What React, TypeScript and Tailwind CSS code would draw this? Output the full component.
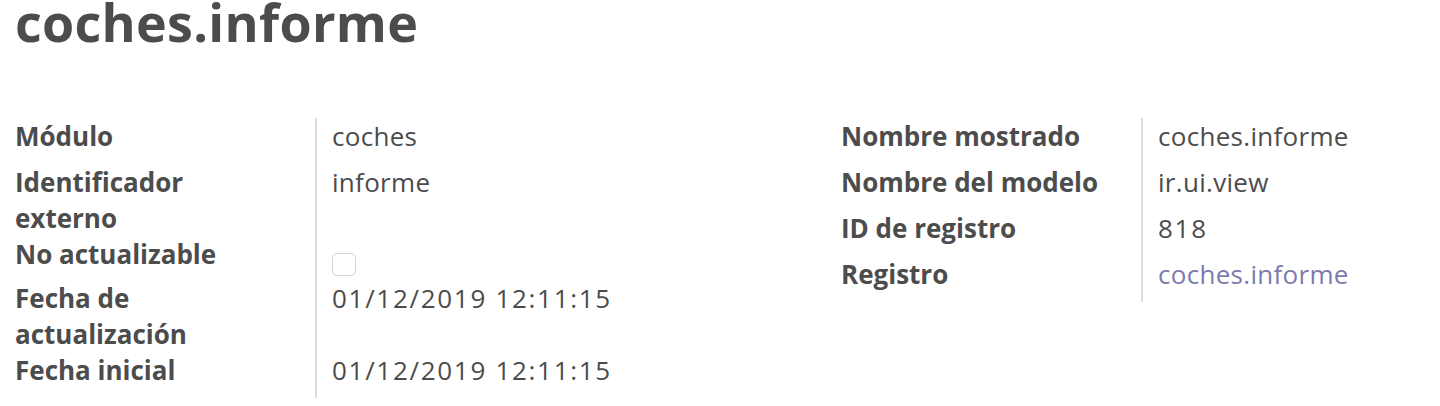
const font = { fontFamily: '"Open Sans", "Noto Sans", sans-serif' }

type Row = { label: string; value?: string; kind?: 'text' | 'date' | 'check' | 'link'; h: string }

const leftRows: Row[] = [
  { label: 'Módulo', value: 'coches', h: 'min-h-[46px]' },
  { label: 'Identificador externo', value: 'informe', h: 'min-h-[46px]' },
  { label: 'No actualizable', kind: 'check', h: 'min-h-[44px]' },
  { label: 'Fecha de actualización', value: '01/12/2019 12:11:15', kind: 'date', h: 'min-h-[46px]' },
  { label: 'Fecha inicial', value: '01/12/2019 12:11:15', kind: 'date', h: 'min-h-[46px]' },
]

const rightRows: Row[] = [
  { label: 'Nombre mostrado', value: 'coches.informe', h: 'min-h-[46px]' },
  { label: 'Nombre del modelo', value: 'ir.ui.view', h: 'min-h-[46px]' },
  { label: 'ID de registro', value: '818', kind: 'date', h: 'min-h-[46px]' },
  { label: 'Registro', value: 'coches.informe', kind: 'link', h: 'min-h-[46px]' },
]

function FieldGroup({ rows }: { rows: Row[] }) {
  return (
    <div className="grid grid-cols-[302px_1fr] text-[26px] leading-[36px]">
      {rows.map((r) => (
        <div key={r.label} className="contents">
          <div className={`${r.h} border-r-2 border-[#dddddd] font-bold`}>
            <span className="block w-[262px]">{r.label}</span>
          </div>
          <div className={`${r.h} pl-[15px]`}>
            {r.kind === 'check' ? (
              <div className="mt-[17px] h-[23px] w-[24px] rounded-[5px] border border-[#d4d4d4] bg-white" />
            ) : r.kind === 'link' ? (
              <span className="tracking-[0.3px] text-[#7c7bad]">{r.value}</span>
            ) : r.kind === 'date' ? (
              <span className="tracking-[1.7px]">{r.value}</span>
            ) : (
              <span className="tracking-[0.3px]">{r.value}</span>
            )}
          </div>
        </div>
      ))}
    </div>
  )
}

export default function App() {
  return (
    <div className="h-[406px] w-[1440px] overflow-hidden bg-white pl-[15px] text-[#4c4c4c]" style={font}>
      <h1 className="-mt-1 text-[52px] font-bold leading-[52px] tracking-[0.3px]">coches.informe</h1>
      <div className="mt-[70px] grid grid-cols-[826px_1fr] items-start">
        <FieldGroup rows={leftRows} />
        <FieldGroup rows={rightRows} />
      </div>
    </div>
  )
}
